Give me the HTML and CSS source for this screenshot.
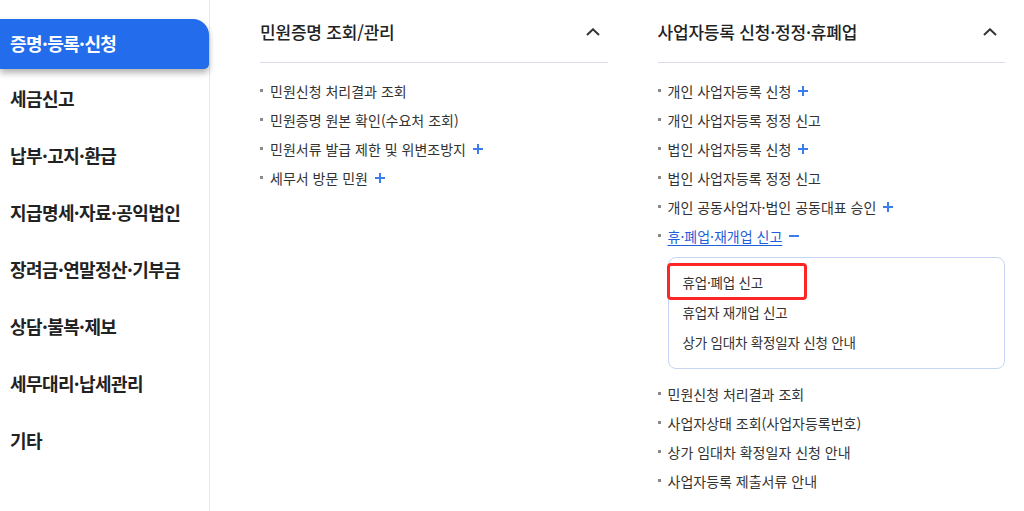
FILE: index.html
```html
<!DOCTYPE html>
<html lang="ko">
<head>
<meta charset="utf-8">
<link rel="stylesheet" href="styles.css">
</head>
<body>
<div class="page">
  <nav class="sidebar">
    <a class="nav-item active">증명·등록·신청</a>
    <a class="nav-item">세금신고</a>
    <a class="nav-item">납부·고지·환급</a>
    <a class="nav-item">지급명세·자료·공익법인</a>
    <a class="nav-item">장려금·연말정산·기부금</a>
    <a class="nav-item">상담·불복·제보</a>
    <a class="nav-item">세무대리·납세관리</a>
    <a class="nav-item">기타</a>
  </nav>
  <main class="main">
    <section class="col">
      <div class="col-head">
        <span class="col-title">민원증명 조회/관리</span>
        <svg class="chev" width="14" height="8" viewBox="0 0 14 8"><polyline points="1,7 7,1.3 13,7" fill="none" stroke="#333" stroke-width="2"/></svg>
      </div>
      <ul class="list">
        <li class="item"><span class="bullet"></span>민원신청 처리결과 조회</li>
        <li class="item"><span class="bullet"></span>민원증명 원본 확인(수요처 조회)</li>
        <li class="item"><span class="bullet"></span>민원서류 발급 제한 및 위변조방지<svg class="plus" width="10" height="10" viewBox="0 0 10 10"><path d="M5 0V10M0 5H10" stroke="#3b7ded" stroke-width="2"/></svg></li>
        <li class="item"><span class="bullet"></span>세무서 방문 민원<svg class="plus" width="10" height="10" viewBox="0 0 10 10"><path d="M5 0V10M0 5H10" stroke="#3b7ded" stroke-width="2"/></svg></li>
      </ul>
    </section>
    <section class="col">
      <div class="col-head">
        <span class="col-title">사업자등록 신청·정정·휴폐업</span>
        <svg class="chev" width="14" height="8" viewBox="0 0 14 8"><polyline points="1,7 7,1.3 13,7" fill="none" stroke="#333" stroke-width="2"/></svg>
      </div>
      <ul class="list">
        <li class="item"><span class="bullet"></span>개인 사업자등록 신청<svg class="plus" width="10" height="10" viewBox="0 0 10 10"><path d="M5 0V10M0 5H10" stroke="#3b7ded" stroke-width="2"/></svg></li>
        <li class="item"><span class="bullet"></span>개인 사업자등록 정정 신고</li>
        <li class="item"><span class="bullet"></span>법인 사업자등록 신청<svg class="plus" width="10" height="10" viewBox="0 0 10 10"><path d="M5 0V10M0 5H10" stroke="#3b7ded" stroke-width="2"/></svg></li>
        <li class="item"><span class="bullet"></span>법인 사업자등록 정정 신고</li>
        <li class="item"><span class="bullet"></span>개인 공동사업자·법인 공동대표 승인<svg class="plus" width="10" height="10" viewBox="0 0 10 10"><path d="M5 0V10M0 5H10" stroke="#3b7ded" stroke-width="2"/></svg></li>
        <li class="item"><span class="bullet"></span><a class="link">휴·폐업·재개업 신고</a><svg class="minus" width="10" height="10" viewBox="0 0 10 10"><path d="M0 5H10" stroke="#3b7ded" stroke-width="2"/></svg></li>
      </ul>
      <div class="sub">
        <div class="sub-item">휴업·폐업 신고</div>
        <div class="sub-item">휴업자 재개업 신고</div>
        <div class="sub-item">상가 임대차 확정일자 신청 안내</div>
        <div class="mark"></div>
      </div>
      <ul class="list list-tail">
        <li class="item"><span class="bullet"></span>민원신청 처리결과 조회</li>
        <li class="item"><span class="bullet"></span>사업자상태 조회(사업자등록번호)</li>
        <li class="item"><span class="bullet"></span>상가 임대차 확정일자 신청 안내</li>
        <li class="item"><span class="bullet"></span>사업자등록 제출서류 안내</li>
      </ul>
    </section>
  </main>
</div>
</body>
</html>
```
FILE: styles.css
```css
* { box-sizing: border-box; }
html, body { margin: 0; padding: 0; background: #fff; }
body {
  font-family: "Noto Sans CJK KR", "Noto Sans", sans-serif;
  color: #222;
  overflow: hidden;
}
.page {
  display: flex;
  height: 511px;
}
.sidebar {
  width: 210px;
  flex: none;
  border-right: 1px solid #e6e6f2;
  padding-top: 15px;
  display: flex;
  flex-direction: column;
}
.nav-item {
  height: 57px;
  display: flex;
  align-items: center;
  padding-left: 10px;
  padding-bottom: 3px;
  font-size: 18px;
  font-weight: 700;
  color: #222;
  letter-spacing: -0.6px;
}
.nav-item.active {
  height: 50px;
  margin: 4px 0 2px;
  width: 209px;
  padding-bottom: 2px;
  background: #236ceb;
  color: #fff;
  border-radius: 0 16px 5px 0;
  box-shadow: 0 4px 6px rgba(0, 0, 0, 0.3);
}
.main {
  flex: 1;
  display: flex;
  gap: 50px;
  padding: 0 19px 0 50px;
}
.col {
  flex: 1;
  min-width: 0;
}
.col-head {
  height: 63px;
  padding-top: 1px;
  border-bottom: 1px solid #dcdce6;
  display: flex;
  align-items: center;
  justify-content: space-between;
}
.col-title {
  font-size: 17px;
  font-weight: 500;
  color: #222;
  letter-spacing: -0.2px;
}
.chev { margin-right: 8px; margin-top: 1px; }
.list {
  list-style: none;
  margin: 0;
  padding: 13px 0 0;
}
.list-tail { padding-top: 0; }
.item {
  height: 29px;
  display: flex;
  align-items: center;
  font-size: 14px;
  color: #333;
}
.bullet {
  width: 3px;
  height: 3px;
  background: #8a8a8a;
  margin-right: 7px;
  flex: none;
}
.plus, .minus { margin-left: 7px; flex: none; }
.link {
  color: #1f5fd9;
  text-decoration: underline;
  text-underline-offset: 3px;
}
.sub {
  position: relative;
  margin: 7px 0 10px 10px;
  border: 1px solid #c6d6f2;
  border-radius: 8px;
  padding: 9px 0 11px 14px;
}
.sub-item {
  height: 30px;
  display: flex;
  align-items: center;
  font-size: 13.5px;
  color: #333;
  letter-spacing: -0.2px;
}
.mark {
  position: absolute;
  left: -2px;
  top: 5px;
  width: 140px;
  height: 37px;
  border: 3px solid #ff2626;
  border-radius: 4px;
}
```
